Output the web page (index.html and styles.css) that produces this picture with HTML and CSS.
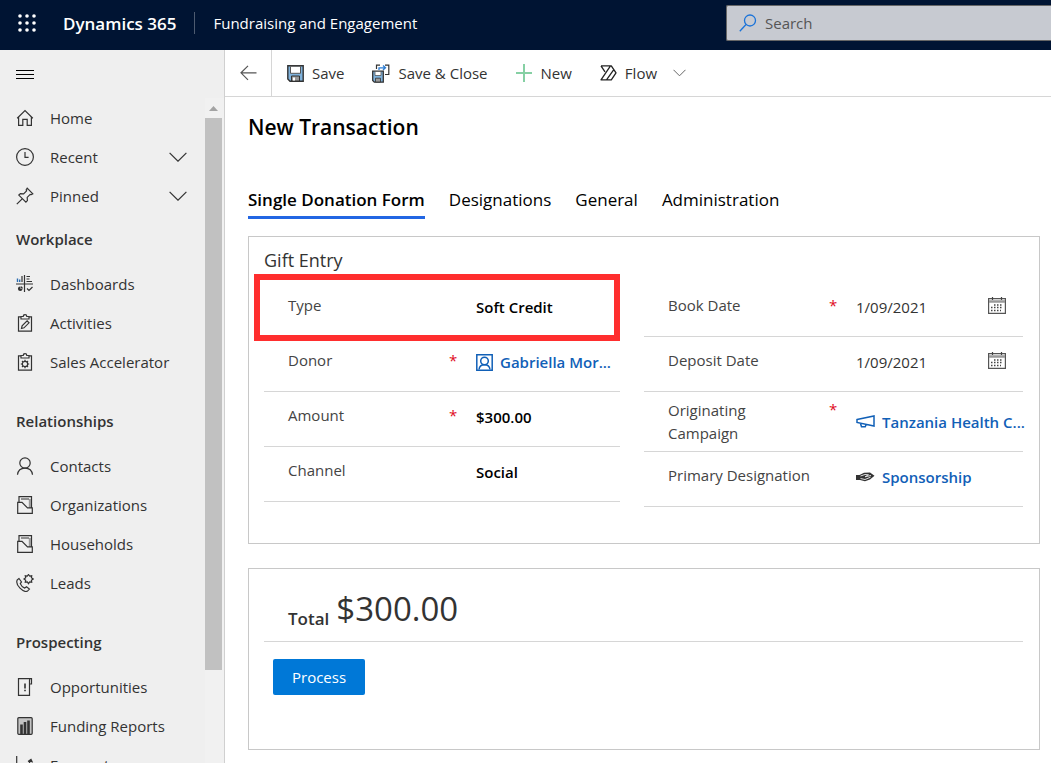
FILE: index.html
```html
<!DOCTYPE html>
<html lang="en">
<head>
  <meta charset="UTF-8">
  <meta name="viewport" content="width=device-width, initial-scale=1.0">
  <title>New Transaction - Dynamics 365</title>
  <link rel="stylesheet" href="styles.css">
</head>
<body>
  <header class="topbar">
    <button class="waffle" type="button" aria-label="App launcher">
      <svg width="18" height="18" viewBox="0 0 18 18" fill="#fff">
        <circle cx="2" cy="2" r="1.800"/><circle cx="9" cy="2" r="1.800"/><circle cx="16" cy="2" r="1.800"/>
        <circle cx="2" cy="9" r="1.800"/><circle cx="9" cy="9" r="1.800"/><circle cx="16" cy="9" r="1.800"/>
        <circle cx="2" cy="16" r="1.800"/><circle cx="9" cy="16" r="1.800"/><circle cx="16" cy="16" r="1.800"/>
      </svg>
    </button>
    <a href="#" class="brand">Dynamics 365</a>
    <span class="topbar-divider"></span>
    <a href="#" class="app-name">Fundraising and Engagement</a>
    <div class="search">
      <svg width="18" height="18" viewBox="0 0 18 18" fill="none" stroke="#1a73d9" stroke-width="1.3">
        <circle cx="11" cy="6.5" r="5.5"/><path d="M7 10.5L.8 17.2"/>
      </svg>
      <input type="text" placeholder="Search" aria-label="Search">
    </div>
  </header>

  <div class="layout">
    <aside class="sidebar">
      <button class="menu-toggle" type="button" aria-label="Toggle menu">
        <svg width="18" height="11" viewBox="0 0 18 11" stroke="#000" shape-rendering="crispEdges"><path d="M0 1.5h18M0 5.5h18M0 9.5h18"/></svg>
      </button>
      <div class="sidebar-body">
        <nav class="nav">
          <ul class="nav-group">
            <li><a href="#" class="nav-item">
              <svg class="icon" viewBox="0 0 18 18"><path d="M1.2 9.2L9 1.6l7.8 7.6M2.6 8v8.4h4.2v-6h4.4v6h4.2V8"/></svg>
              <span>Home</span></a></li>
            <li><a href="#" class="nav-item">
              <svg class="icon" viewBox="0 0 18 18"><circle cx="9" cy="9" r="8.4"/><path d="M9 4v5.3h3.6"/></svg>
              <span>Recent</span>
              <svg class="chevron" viewBox="0 0 18 10"><path d="M.6.8L9 9.2 17.4.8"/></svg></a></li>
            <li><a href="#" class="nav-item">
              <svg class="icon" viewBox="0 0 18 18"><path d="M11.2 1.2l5.6 5.6-1.6.9-1-.3-3 3 .2 3.2-1.5 1.6L2.8 8.1l1.6-1.5 3.2.2 3-3-.4-1zM6.2 11.8L.8 17.2"/></svg>
              <span>Pinned</span>
              <svg class="chevron" viewBox="0 0 18 10"><path d="M.6.8L9 9.2 17.4.8"/></svg></a></li>
          </ul>

          <h2 class="nav-heading">Workplace</h2>
          <ul class="nav-group">
            <li><a href="#" class="nav-item">
              <svg class="icon" viewBox="0 0 18 18"><path d="M0 9h17M8.500 0v17"/><path d="M1.500 7V3.500M3.700 7V4.500" stroke="#2b6cb0" stroke-width="1.400"/><path d="M6 7V1M10.500 1.500H14M10.500 4h3M10.500 6.500h5.500M11 13.500l2 2 3.500-3.500"/><path d="M4.500 11.500a2.300 2.300 0 1 0 2 2.500h-2z" fill="#333" stroke="none"/><path d="M5.500 11.500v1.500h1.500"/></svg>
              <span>Dashboards</span></a></li>
            <li><a href="#" class="nav-item">
              <svg class="icon" viewBox="0 0 18 18"><path d="M5 2.800H2.500v14.400h13V2.800H13M5 5V2.500h2.200a1.800 1.800 0 0 1 3.600 0H13V5zM5.500 14.500l.6-2.600 5-5 1.900 1.900-5 5z"/></svg>
              <span>Activities</span></a></li>
            <li><a href="#" class="nav-item">
              <svg class="icon" viewBox="0 0 18 18"><path d="M5 2.800H2.500v14.400h13V2.800H13M5 5V2.500h2.200a1.800 1.800 0 0 1 3.600 0H13V5z"/><circle cx="9" cy="11" r="2.700"/><path d="M9 6.800v1.500M9 13.700v1.500M4.800 11h1.500M11.700 11h1.500M6 8l1.100 1.100M12 8l-1.100 1.100M6 14l1.100-1.100M12 14l-1.100-1.100"/></svg>
              <span>Sales Accelerator</span></a></li>
          </ul>

          <h2 class="nav-heading">Relationships</h2>
          <ul class="nav-group">
            <li><a href="#" class="nav-item">
              <svg class="icon" viewBox="0 0 18 18"><circle cx="9" cy="6" r="5.200"/><path d="M1.500 17.800C2 13.500 5 11.200 9 11.200s7 2.300 7.500 6.600"/></svg>
              <span>Contacts</span></a></li>
            <li><a href="#" class="nav-item">
              <svg class="icon" viewBox="0 0 18 18"><path d="M13.800 3v9" stroke="#999" stroke-width="2"/><path d="M3 6V.7h12.500V12M5 3h8M1.700 6.300H6l5.500 5.500h4.800v5.500H1.700z"/></svg>
              <span>Organizations</span></a></li>
            <li><a href="#" class="nav-item">
              <svg class="icon" viewBox="0 0 18 18"><path d="M13.800 3v9" stroke="#999" stroke-width="2"/><path d="M3 6V.7h12.500V12M5 3h8M1.700 6.300H6l5.500 5.500h4.800v5.500H1.700z"/></svg>
              <span>Households</span></a></li>
            <li><a href="#" class="nav-item">
              <svg class="icon" viewBox="0 0 18 18"><path d="M12.500.5l1.200 1.700 2-.4-.3 2 1.800 1.200-1.800 1.200.3 2-2-.3-1.200 1.800-1.200-1.800-2 .3.4-2L8 5l1.700-1.200-.4-2 2 .4z"/><path d="M3 4.500L1.300 5.800C.2 8 1.300 11.500 4 14.200s6 3.800 7.700 2.700l1.700-1.800-2.900-2.300-1.800 1.300c-1.700-.6-3.600-2.500-4.400-4.500l1.200-1.700z"/></svg>
              <span>Leads</span></a></li>
          </ul>

          <h2 class="nav-heading">Prospecting</h2>
          <ul class="nav-group">
            <li><a href="#" class="nav-item">
              <svg class="icon" viewBox="0 0 18 18"><path d="M13.500 6v11.300h-11V.7h13V6h-2V2.500c0-1 .5-1.800 1-1.800"/><path d="M9 5.500v5M9 11.800v1.400" stroke-width="1.600"/></svg>
              <span>Opportunities</span></a></li>
            <li><a href="#" class="nav-item">
              <svg class="icon" viewBox="0 0 18 18"><rect x="1.800" y=".7" width="14.400" height="16.600" rx="1" fill="#c4c4c4"/><path d="M5.500 17V7.500M9 17V5M12.500 17V3.500" stroke-width="2.600"/></svg>
              <span>Funding Reports</span></a></li>
            <li><a href="#" class="nav-item">
              <svg class="icon" viewBox="0 0 18 18"><path d="M.7 0v17.300H18M3 13l5-5 3 3 4-7M12 5.500l3-2 1.500 3"/></svg>
              <span>Forecasts</span></a></li>
          </ul>
        </nav>
        <div class="scrollbar">
          <svg class="scroll-arrow" width="9" height="5" viewBox="0 0 9 5"><path d="M0 5L4.500 0 9 5z" fill="#a3a3a3"/></svg>
          <div class="scroll-thumb"></div>
        </div>
      </div>
    </aside>

    <main class="main">
      <div class="commands">
        <button class="back" type="button" aria-label="Go back">
          <svg width="17" height="16" viewBox="0 0 17 16" fill="none" stroke="#555" stroke-width="1.200"><path d="M8 .8L1 7.800l7 7M1 7.800h15.500"/></svg>
        </button>
        <button class="command" type="button">
          <svg width="17" height="17" viewBox="0 0 17 17">
            <path d="M.8.800h15.400v15.400H3L.8 14z" fill="#7fb2dc" stroke="#333" stroke-width="1.400"/>
            <path d="M3.500 1.300h10v7h-10z" fill="#fff" stroke="#555"/>
            <path d="M4.500 11h8v5h-8z" fill="#999" stroke="#333"/><path d="M6 12.500h2v3H6z" fill="#fff"/>
          </svg>
          <span>Save</span>
        </button>
        <button class="command" type="button">
          <svg width="18" height="19" viewBox="0 0 18 19">
            <path d="M4.500 5V1.200H8M13 1.200h3.800v9.300H13" fill="none" stroke="#333" stroke-width="1.200"/>
            <path d="M7 6V3.800h6M11 1.500l2.500 2.300L11 6" fill="none" stroke="#2b7cd3" stroke-width="1.300"/>
            <path d="M.7 7.200h10.600v11H2.300L.7 16.500z" fill="#7fb2dc" stroke="#333" stroke-width="1.300"/>
            <path d="M3 7.500h6v4H3z" fill="#fff" stroke="#555" stroke-width=".8"/>
            <path d="M3.500 14.200h5v3.800h-5z" fill="#999" stroke="#333" stroke-width=".8"/>
          </svg>
          <span>Save &amp; Close</span>
        </button>
        <button class="command" type="button">
          <svg width="17" height="18" viewBox="0 0 17 18" stroke="#86d0a4" stroke-width="2" shape-rendering="crispEdges"><path d="M8 0v18M0 9h16"/></svg>
          <span>New</span>
        </button>
        <button class="command" type="button">
          <svg width="17" height="16" viewBox="0 0 17 16" fill="none" stroke="#222" stroke-width="1.300" stroke-linejoin="round"><path d="M1 .8h10.300l4.700 7-4.700 7H1L10.500.8M1 .8l4 6M13.800 4.600L6.500 14.800"/></svg>
          <span>Flow</span>
          <svg class="command-chevron" width="13" height="8" viewBox="0 0 13 8" fill="none" stroke="#666"><path d="M.5.800l6 6 6-6"/></svg>
        </button>
      </div>

      <div class="content">
        <h1 class="page-title">New Transaction</h1>

        <nav class="tabs">
          <a href="#" class="tab active">Single Donation Form</a>
          <a href="#" class="tab">Designations</a>
          <a href="#" class="tab">General</a>
          <a href="#" class="tab">Administration</a>
        </nav>

        <section class="card">
          <h2 class="card-title">Gift Entry</h2>
          <div class="columns">
            <div class="column">
              <div class="field highlighted">
                <label class="label" for="type">Type</label>
                <span class="required"></span>
                <div class="value"><input class="text-value" id="type" type="text" value="Soft Credit"></div>
              </div>
              <div class="field">
                <span class="label" id="donor-label">Donor</span>
                <span class="required">*</span>
                <div class="value">
                  <svg width="17" height="17" viewBox="0 0 17 17" fill="none" stroke="#1160b7" stroke-width="1.500"><path d="M.8.800h15.400v15.400H.8z"/><circle cx="8.500" cy="7" r="3.800"/><path d="M3 15.500c.4-3 2.400-4.700 5.500-4.700s5.100 1.700 5.500 4.700"/></svg>
                  <a href="#" class="lookup" aria-describedby="donor-label">Gabriella Mor...</a>
                </div>
              </div>
              <div class="field">
                <label class="label" for="amount">Amount</label>
                <span class="required">*</span>
                <div class="value"><input class="text-value" id="amount" type="text" value="$300.00"></div>
              </div>
              <div class="field">
                <label class="label" for="channel">Channel</label>
                <span class="required"></span>
                <div class="value"><input class="text-value" id="channel" type="text" value="Social"></div>
              </div>
            </div>

            <div class="column">
              <div class="field">
                <label class="label" for="book-date">Book Date</label>
                <span class="required">*</span>
                <div class="value">
                  <input class="date-value" id="book-date" type="text" value="1/09/2021">
                  <button class="calendar" type="button" aria-label="Pick book date">
                    <svg width="18" height="17" viewBox="0 0 18 17" fill="none"><path d="M.6 1.600h16.800v14.800H.6z" stroke="#555" stroke-width="1.200"/><path d="M1 4.500h16" stroke="#999" stroke-width="2.500"/><path d="M4.500 0v3M13.500 0v3" stroke="#444" stroke-width="1.200"/><path d="M6 8h9M3 10.500h12M3 13.500h10" stroke="#444" stroke-width="1.300" stroke-dasharray="1.500 1.500"/></svg>
                  </button>
                </div>
              </div>
              <div class="field">
                <label class="label" for="deposit-date">Deposit Date</label>
                <span class="required"></span>
                <div class="value">
                  <input class="date-value" id="deposit-date" type="text" value="1/09/2021">
                  <button class="calendar" type="button" aria-label="Pick deposit date">
                    <svg width="18" height="17" viewBox="0 0 18 17" fill="none"><path d="M.6 1.600h16.800v14.800H.6z" stroke="#555" stroke-width="1.200"/><path d="M1 4.500h16" stroke="#999" stroke-width="2.500"/><path d="M4.500 0v3M13.500 0v3" stroke="#444" stroke-width="1.200"/><path d="M6 8h9M3 10.500h12M3 13.500h10" stroke="#444" stroke-width="1.300" stroke-dasharray="1.500 1.500"/></svg>
                  </button>
                </div>
              </div>
              <div class="field two-line">
                <span class="label" id="campaign-label">Originating Campaign</span>
                <span class="required">*</span>
                <div class="value">
                  <svg width="19" height="13" viewBox="0 0 19 13" fill="none" stroke="#1160b7" stroke-width="1.500"><path d="M1 4.500L18 1v10L1 7.500zM4.500 8.500l1 3.300h3.700l1-2.300"/></svg>
                  <a href="#" class="lookup" aria-describedby="campaign-label">Tanzania Health C...</a>
                </div>
              </div>
              <div class="field">
                <span class="label" id="designation-label">Primary Designation</span>
                <span class="required"></span>
                <div class="value">
                  <svg width="19" height="10" viewBox="0 0 19 10"><path d="M0 3h3.500L8 .8 14 .6l4.500 3.200-4.500 3.700L9 9.300 4 8H0z" fill="#333"/><path d="M4.500 4l4.500-1.500 3.500.3-3.500 2 6-1.300M4.500 6.500l4.500 1 5.500-2.300" fill="none" stroke="#ddd" stroke-width="1"/></svg>
                  <a href="#" class="lookup" aria-describedby="designation-label">Sponsorship</a>
                </div>
              </div>
            </div>
          </div>
        </section>

        <section class="card total-card">
          <div class="total">
            <span class="total-label">Total</span>
            <span class="total-amount">$300.00</span>
          </div>
          <button class="process" type="button">Process</button>
        </section>
      </div>
    </main>
  </div>
</body>
</html>
```
FILE: styles.css
```css
* {
  margin: 0;
  padding: 0;
  box-sizing: border-box;
}

body {
  display: flex;
  flex-direction: column;
  height: 100vh;
  overflow: hidden;
  font-family: 'Open Sans', 'Noto Sans', sans-serif;
  font-size: 15px;
  color: #333;
  background: #fff;
}

a {
  color: inherit;
  text-decoration: none;
}

ul {
  list-style: none;
}

svg {
  display: block;
  flex-shrink: 0;
}

button,
input {
  font: inherit;
  color: inherit;
  background: none;
  border: none;
  outline: none;
}

button {
  cursor: pointer;
}

/* Top bar */
.topbar {
  display: flex;
  align-items: center;
  flex-shrink: 0;
  height: 50px;
  padding-left: 18px;
  padding-bottom: 4px;
  color: #fff;
  background: #001433;
}

.brand {
  margin-left: 27px;
  font-size: 17px;
  font-weight: 600;
}

.topbar-divider {
  width: 1px;
  height: 22px;
  margin: 0 18px;
  background: #4d5b70;
}

.app-name {
  font-size: 15px;
}

.search {
  display: flex;
  align-items: center;
  gap: 8px;
  width: 325px;
  height: 36px;
  margin-left: auto;
  padding-left: 12px;
  color: #555;
  background: #c7cad1;
  border: 1px solid #666;
  border-right: none;
  border-radius: 2px 0 0 2px;
}

.search input {
  flex: 1;
  min-width: 0;
}

.search input::placeholder {
  color: #555;
}

/* Sidebar */
.layout {
  display: flex;
  flex: 1;
  min-height: 0;
}

.sidebar {
  display: flex;
  flex-direction: column;
  flex-shrink: 0;
  width: 225px;
  background: #efefef;
  border-right: 1px solid #d0d0d0;
}

.menu-toggle {
  flex-shrink: 0;
  height: 48px;
  padding-left: 16px;
}

.sidebar-body {
  display: flex;
  flex: 1;
  min-height: 0;
}

.nav {
  flex: 1;
  overflow: hidden;
}

.nav-item {
  display: flex;
  align-items: center;
  gap: 16px;
  height: 39px;
  padding: 0 18px 0 16px;
}

.nav-heading {
  height: 49px;
  font-size: 15px;
  font-weight: 600;
  line-height: 49px;
  padding-left: 16px;
}

.nav-group + .nav-heading {
  margin-top: 16px;
}

.nav-group:first-child + .nav-heading {
  margin-top: 0;
}

.icon {
  width: 18px;
  height: 18px;
  fill: none;
  stroke: #333;
  stroke-width: 1.2;
}

.chevron {
  width: 18px;
  height: 10px;
  margin-left: auto;
  fill: none;
  stroke: #333;
  stroke-width: 1.2;
}

.scrollbar {
  display: flex;
  flex-direction: column;
  width: 19px;
  padding-right: 2px;
  background: #f1f1f1;
}

.scroll-arrow {
  margin: 8px auto 7px;
}

.scroll-thumb {
  height: 83%;
  background: #c1c1c1;
}

/* Command bar */
.main {
  display: flex;
  flex-direction: column;
  flex: 1;
  min-width: 0;
}

.commands {
  display: flex;
  align-items: center;
  flex-shrink: 0;
  gap: 28px;
  height: 47px;
  border-bottom: 1px solid #d6d6d6;
}

.back {
  display: flex;
  align-items: center;
  justify-content: center;
  width: 47px;
  height: 100%;
  margin-right: -13px;
  border-right: 1px solid #d6d6d6;
}

.command {
  display: flex;
  align-items: center;
  gap: 8px;
}

.command-chevron {
  margin-left: 8px;
}

/* Form */
.content {
  padding: 14px 11px 13px 23px;
}

.page-title {
  font-size: 21px;
  font-weight: 600;
  line-height: 32px;
  color: #000;
}

.tabs {
  display: flex;
  gap: 24px;
  margin: 45px 0 17px;
  font-size: 17px;
  line-height: 24px;
  color: #000;
}

.tab {
  padding-bottom: 4px;
  border-bottom: 3px solid transparent;
}

.tab.active {
  font-weight: 600;
  border-bottom-color: #2266e3;
}

.card {
  padding: 11px 16px 36px 15px;
  border: 1px solid #c8c8c8;
}

.card-title {
  font-size: 18px;
  font-weight: 400;
  line-height: 24px;
}

.columns {
  display: grid;
  grid-template-columns: 356fr 379fr;
  gap: 24px;
  padding-top: 10px;
}

.field {
  position: relative;
  display: grid;
  grid-template-columns: 161px 27px 1fr;
  align-items: center;
  min-height: 55px;
  padding-left: 24px;
  border-bottom: 1px solid #d6d6d6;
}

.two-line {
  min-height: 60px;
}

.highlighted::after {
  content: '';
  position: absolute;
  top: -8px;
  right: 0;
  bottom: -5px;
  left: -10px;
  border: 6px solid #ff2e2e;
  pointer-events: none;
}

.label,
.required {
  padding-bottom: 8px;
  line-height: 23px;
  color: #444;
}

.label {
  padding-right: 16px;
}

.required {
  color: #e00b1c;
}

.two-line .label {
  padding: 6px 16px 6px 0;
}

.two-line .required {
  align-self: start;
  padding-top: 6px;
}

.value {
  display: flex;
  align-items: center;
  gap: 7px;
  min-width: 0;
  padding-bottom: 4px;
}

.two-line .value {
  padding-bottom: 0;
}

.text-value,
.date-value {
  flex: 1;
  width: 100%;
  min-width: 0;
}

.text-value {
  font-weight: 600;
  color: #000;
}

.calendar {
  padding: 0 17px 4px 0;
}

.lookup {
  font-weight: 600;
  color: #1160b7;
  white-space: nowrap;
}

/* Total */
.total-card {
  margin-top: 24px;
  padding: 15px 16px 54px 15px;
}

.total {
  display: flex;
  align-items: flex-end;
  gap: 7px;
  padding: 0 24px 7px;
  border-bottom: 1px solid #d6d6d6;
}

.total-label {
  font-size: 17px;
  font-weight: 600;
  line-height: 30px;
}

.total-amount {
  font-size: 33px;
  font-weight: 400;
  line-height: 50px;
}

.process {
  height: 36px;
  margin: 17px 0 0 9px;
  padding: 0 19px;
  color: #fff;
  background: #0078d7;
  border-radius: 2px;
}
```
